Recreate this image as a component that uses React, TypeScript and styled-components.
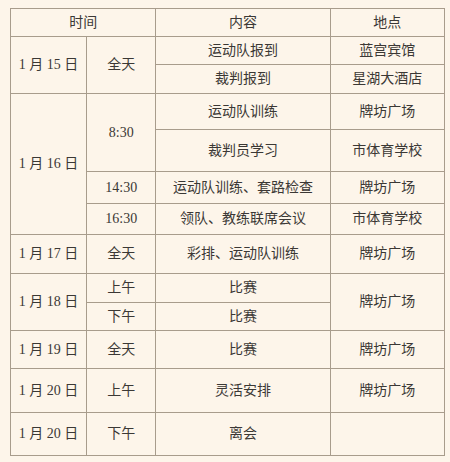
import * as React from "react";
import styled, { createGlobalStyle } from "styled-components";

const GlobalStyle = createGlobalStyle`
  html, body {
    margin: 0;
    padding: 0;
    background: #fdf5ea;
  }
  body {
    width: 450px;
    height: 462px;
    overflow: hidden;
  }
`;

const Page = styled.div`
  padding: 8px 0 0 10px;
`;

const Table = styled.table`
  border-collapse: collapse;
  table-layout: fixed;
  width: 435px;
  font-family: "Liberation Serif", "Noto Sans CJK SC", serif;
  font-size: 14px;
  color: #3b3835;
`;

const Row = styled.tr<{ h: number }>`
  height: ${(p) => p.h}px;
`;

const Cell = styled.td`
  border: 1px solid #a89c8c;
  text-align: center;
  vertical-align: middle;
  padding: 0;
  line-height: 16px;
  white-space: nowrap;
`;

const HeadCell = styled(Cell).attrs({ as: "th" })`
  font-weight: normal;
`;

export default function App() {
  return (
    <>
      <GlobalStyle />
      <Page>
        <Table>
          <colgroup>
            <col style={{ width: 76 }} />
            <col style={{ width: 69 }} />
            <col style={{ width: 174 }} />
            <col style={{ width: 114 }} />
          </colgroup>
          <tbody>
            <Row h={28}>
              <HeadCell colSpan={2}>时间</HeadCell>
              <HeadCell>内容</HeadCell>
              <HeadCell>地点</HeadCell>
            </Row>
            <Row h={28}>
              <Cell rowSpan={2}>1 月 15 日</Cell>
              <Cell rowSpan={2}>全天</Cell>
              <Cell>运动队报到</Cell>
              <Cell>蓝宫宾馆</Cell>
            </Row>
            <Row h={29}>
              <Cell>裁判报到</Cell>
              <Cell>星湖大酒店</Cell>
            </Row>
            <Row h={36}>
              <Cell rowSpan={4}>1 月 16 日</Cell>
              <Cell rowSpan={2}>8:30</Cell>
              <Cell>运动队训练</Cell>
              <Cell>牌坊广场</Cell>
            </Row>
            <Row h={42}>
              <Cell>裁判员学习</Cell>
              <Cell>市体育学校</Cell>
            </Row>
            <Row h={32}>
              <Cell>14:30</Cell>
              <Cell>运动队训练、套路检查</Cell>
              <Cell>牌坊广场</Cell>
            </Row>
            <Row h={31}>
              <Cell>16:30</Cell>
              <Cell>领队、教练联席会议</Cell>
              <Cell>市体育学校</Cell>
            </Row>
            <Row h={39}>
              <Cell>1 月 17 日</Cell>
              <Cell>全天</Cell>
              <Cell>彩排、运动队训练</Cell>
              <Cell>牌坊广场</Cell>
            </Row>
            <Row h={29}>
              <Cell rowSpan={2}>1 月 18 日</Cell>
              <Cell>上午</Cell>
              <Cell>比赛</Cell>
              <Cell rowSpan={2}>牌坊广场</Cell>
            </Row>
            <Row h={28}>
              <Cell>下午</Cell>
              <Cell>比赛</Cell>
            </Row>
            <Row h={38}>
              <Cell>1 月 19 日</Cell>
              <Cell>全天</Cell>
              <Cell>比赛</Cell>
              <Cell>牌坊广场</Cell>
            </Row>
            <Row h={44}>
              <Cell>1 月 20 日</Cell>
              <Cell>上午</Cell>
              <Cell>灵活安排</Cell>
              <Cell>牌坊广场</Cell>
            </Row>
            <Row h={43}>
              <Cell>1 月 20 日</Cell>
              <Cell>下午</Cell>
              <Cell>离会</Cell>
              <Cell></Cell>
            </Row>
          </tbody>
        </Table>
      </Page>
    </>
  );
}
